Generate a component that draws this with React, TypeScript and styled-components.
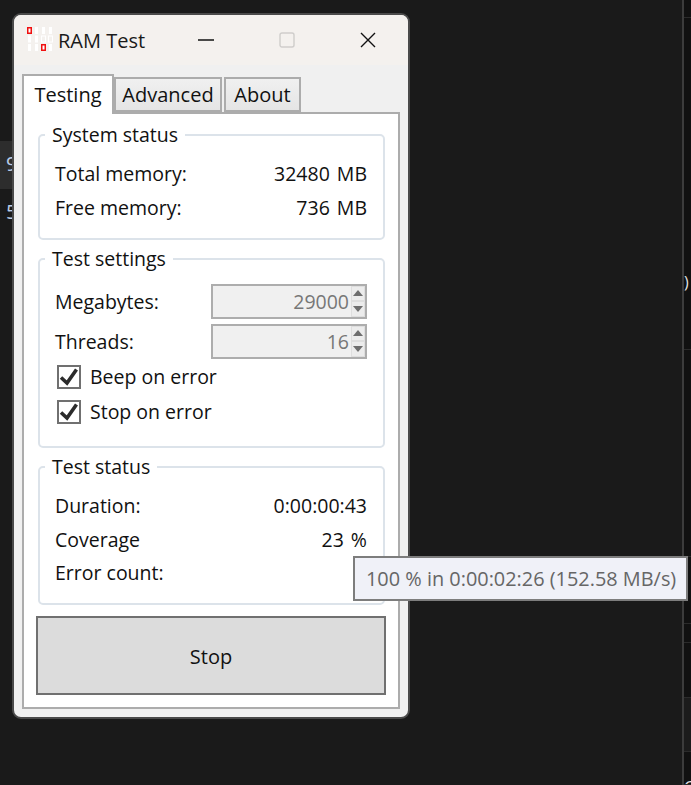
import React from "react"
import styled, { createGlobalStyle } from "styled-components"

const FONT = `"Open Sans", "Noto Sans", sans-serif`

const GlobalStyle = createGlobalStyle`
    html, body {
        margin: 0;
        padding: 0;
        background: #1a1a1a;
    }
    * {
        box-sizing: border-box;
    }
`

const Desktop = styled.div`
    position: relative;
    display: flex;
    width: 691px;
    height: 785px;
    overflow: hidden;
    background: #1a1a1a;
    font-family: ${FONT};
`

const LeftGutter = styled.div`
    width: 12px;
    flex: none;
    padding-top: 141px;
    color: #b9cbe6;
    font-size: 20px;
    line-height: 24px;
`

const GutterRow = styled.div<{ $active?: boolean }>`
    height: ${p => (p.$active ? 48 : 44)}px;
    padding: 11px 0 0 6px;
    background: ${p => (p.$active ? "#2d2d2d" : "transparent")};
    overflow: hidden;
`

const Window = styled.div`
    width: 398px;
    height: 706px;
    margin-top: 13px;
    flex: none;
    display: flex;
    flex-direction: column;
    background: #f0f0f0;
    border: 2px solid #4a4a4a;
    border-radius: 9px;
    overflow: hidden;
`

const TitleBar = styled.div`
    height: 50px;
    flex: none;
    display: flex;
    align-items: center;
    background: #f4f1ee;
    color: #111;
`

const AppIcon = styled.svg`
    width: 28px;
    height: 28px;
    margin-left: 11px;
    flex: none;
`

const Title = styled.div`
    margin-left: 5px;
    width: 108px;
    font-size: 20px;
    color: #1a1a1a;
    white-space: nowrap;
`

const CaptionButton = styled.div`
    width: 81px;
    display: flex;
    justify-content: center;
    align-items: center;
`

const Content = styled.div`
    flex: 1;
    padding: 9px 8px 9px 8px;
    display: flex;
    flex-direction: column;
`

const TabStrip = styled.div`
    height: 38px;
    flex: none;
    display: flex;
    align-items: flex-end;
    position: relative;
    z-index: 1;
`

const Tab = styled.div<{ $active?: boolean; $width: number }>`
    width: ${p => p.$width}px;
    height: ${p => (p.$active ? 40 : 35)}px;
    margin-bottom: ${p => (p.$active ? -2 : 0)}px;
    margin-right: ${p => (p.$active ? 0 : 2)}px;
    padding-bottom: ${p => (p.$active ? 2 : 1)}px;
    display: flex;
    align-items: center;
    justify-content: center;
    font-size: 20px;
    color: #111;
    border: 2px solid #acacac;
    border-bottom: ${p => (p.$active ? "none" : "2px solid #acacac")};
    background: ${p => (p.$active ? "#fff" : "linear-gradient(#f0f0f0, #e5e5e5)")};
`

const TabPanel = styled.div`
    flex: 1;
    display: flex;
    flex-direction: column;
    padding: 20px 12px 12px 14px;
    background: #fff;
    border: 2px solid #acacac;
`

const Group = styled.div<{ $height: number }>`
    position: relative;
    height: ${p => p.$height}px;
    width: 347px;
    flex: none;
    margin-bottom: 18px;
    padding: 21px 16px 0 15px;
    border: 2px solid #dce3ea;
    border-radius: 5px;
    display: flex;
    flex-direction: column;
`

const GroupLegend = styled.div`
    position: absolute;
    top: -14px;
    left: 5px;
    padding: 0 7px;
    background: #fff;
    font-size: 19.5px;
    line-height: 26px;
    color: #111;
`

const InfoRow = styled.div`
    display: flex;
    justify-content: space-between;
    align-items: center;
    height: 33.4px;
    flex: none;
    font-size: 19.5px;
    color: #111;
`

const InfoValue = styled.span`
    word-spacing: 2px;
`

const SpinRow = styled.div`
    display: flex;
    justify-content: space-between;
    align-items: center;
    height: 40px;
    flex: none;
    font-size: 19.5px;
    color: #111;
`

const SpinBox = styled.div`
    width: 156px;
    height: 35px;
    display: flex;
    justify-content: flex-end;
    align-items: center;
    background: #f0f0f0;
    border: 2px solid #adadad;
    color: #777;
    font-size: 19.5px;
`

const SpinButtons = styled.div`
    width: 14px;
    height: 31px;
    margin-left: 2px;
    display: flex;
    flex-direction: column;
`

const SpinButton = styled.div`
    flex: 1;
    display: flex;
    align-items: center;
    justify-content: center;
    background: #ececec;
    border: 1px solid #dedede;
`

const CheckList = styled.div`
    margin-top: -2px;
    display: flex;
    flex-direction: column;
`

const CheckRow = styled.div`
    display: flex;
    align-items: center;
    height: 35px;
    margin-left: 2px;
    font-size: 19.5px;
    color: #111;
`

const CheckBox = styled.div`
    width: 24px;
    height: 24px;
    margin-right: 9px;
    display: flex;
    align-items: center;
    justify-content: center;
    background: #fff;
    border: 2px solid #707070;
`

const StopButton = styled.div`
    width: 350px;
    height: 79px;
    margin-top: -7px;
    margin-left: -2px;
    padding-top: 2px;
    flex: none;
    display: flex;
    align-items: center;
    justify-content: center;
    background: #dcdcdc;
    border: 2px solid #707070;
    font-size: 20px;
    color: #111;
`

const RightPane = styled.div`
    position: relative;
    width: 9px;
    margin-left: auto;
    flex: none;
    display: flex;
    flex-direction: column;
    background: #111;
    border-left: 2px solid #3c3c3c;
    color: #e4e4e4;
    font-size: 16px;
`

const PaneCell = styled.div<{ $height: number; $shade?: boolean; $pad?: number }>`
    height: ${p => p.$height}px;
    flex: none;
    padding-top: ${p => p.$pad ?? 0}px;
    border-bottom: 1px solid #2b2b2b;
    background: ${p => (p.$shade ? "#1c1c1c" : "transparent")};
    overflow: hidden;
    line-height: 20px;
`

const Tooltip = styled.div`
    position: absolute;
    left: 353px;
    top: 556px;
    width: 335px;
    height: 45px;
    display: flex;
    align-items: center;
    padding-left: 11px;
    background: #f0f1f8;
    border: 2px solid #7d7d7d;
    color: #666;
    font-size: 19.9px;
    white-space: nowrap;
`

// bit-grid logo: white digits with two red flagged cells
const Logo = () => {
    const rows = ["0111", "1100", "1101"]
    return (
        <AppIcon viewBox="0 0 28 28">
            {rows.map((row, y) =>
                row.split("").map((bit, x) => {
                    const flagged = (x === 0 && y === 0) || (x === 2 && y === 2)
                    const cx = 2 + x * 7
                    const cy = 1 + y * 8.5
                    if (flagged) {
                        return (
                            <rect key={`${x}-${y}`} x={cx + 0.75} y={cy + 0.75} width={3.5} height={5.5} fill="#fff" stroke="#f01010" strokeWidth={1.5} />
                        )
                    }
                    if (bit === "0") {
                        return <rect key={`${x}-${y}`} x={cx + 0.5} y={cy + 0.5} width={4} height={6} fill="none" stroke="#fff" />
                    }
                    return <rect key={`${x}-${y}`} x={cx + 1} y={cy} width={3} height={7} fill="#fff" />
                })
            )}
        </AppIcon>
    )
}

const Arrow = ({ up }: { up?: boolean }) => (
    <svg width="10" height="6" viewBox="0 0 10 6">
        <path d={up ? "M5 0 L10 6 L0 6 Z" : "M0 0 L10 0 L5 6 Z"} fill="#6e6e6e" />
    </svg>
)

const Spin = ({ value }: { value: string }) => (
    <SpinBox>
        {value}
        <SpinButtons>
            <SpinButton><Arrow up /></SpinButton>
            <SpinButton><Arrow /></SpinButton>
        </SpinButtons>
    </SpinBox>
)

const Check = ({ label }: { label: string }) => (
    <CheckRow>
        <CheckBox>
            <svg width="20" height="20" viewBox="0 0 20 20">
                <path d="M2 10.5 L8 16 L17.5 2.5" fill="none" stroke="#2b2b2b" strokeWidth="3.6" />
            </svg>
        </CheckBox>
        {label}
    </CheckRow>
)

const App = () => {
    return (
        <Desktop>
            <GlobalStyle />
            <LeftGutter>
                <GutterRow $active>9</GutterRow>
                <GutterRow>5</GutterRow>
            </LeftGutter>
            <Window>
                <TitleBar>
                    <Logo />
                    <Title>RAM Test</Title>
                    <CaptionButton>
                        <svg width="16" height="2" viewBox="0 0 16 2">
                            <path d="M0 1 H16" stroke="#111" strokeWidth="1.4" />
                        </svg>
                    </CaptionButton>
                    <CaptionButton>
                        <svg width="16" height="16" viewBox="0 0 16 16">
                            <rect x="1" y="1" width="14" height="14" rx="2" fill="none" stroke="#cfcdcb" strokeWidth="1.4" />
                        </svg>
                    </CaptionButton>
                    <CaptionButton>
                        <svg width="16" height="16" viewBox="0 0 16 16">
                            <path d="M1 1 L15 15 M15 1 L1 15" stroke="#111" strokeWidth="1.4" />
                        </svg>
                    </CaptionButton>
                </TitleBar>
                <Content>
                    <TabStrip>
                        <Tab $active $width={92}>Testing</Tab>
                        <Tab $width={108}>Advanced</Tab>
                        <Tab $width={77}>About</Tab>
                    </TabStrip>
                    <TabPanel>
                        <Group $height={106}>
                            <GroupLegend>System status</GroupLegend>
                            <InfoRow><span>Total memory:</span><InfoValue>32480 MB</InfoValue></InfoRow>
                            <InfoRow><span>Free memory:</span><InfoValue>736 MB</InfoValue></InfoRow>
                        </Group>
                        <Group $height={190}>
                            <GroupLegend>Test settings</GroupLegend>
                            <SpinRow><span>Megabytes:</span><Spin value="29000" /></SpinRow>
                            <SpinRow><span>Threads:</span><Spin value="16" /></SpinRow>
                            <CheckList>
                                <Check label="Beep on error" />
                                <Check label="Stop on error" />
                            </CheckList>
                        </Group>
                        <Group $height={139}>
                            <GroupLegend>Test status</GroupLegend>
                            <InfoRow><span>Duration:</span><InfoValue>0:00:00:43</InfoValue></InfoRow>
                            <InfoRow><span>Coverage</span><InfoValue>23 %</InfoValue></InfoRow>
                            <InfoRow><span>Error count:</span></InfoRow>
                        </Group>
                        <StopButton>Stop</StopButton>
                    </TabPanel>
                </Content>
            </Window>
            <RightPane>
                <PaneCell $height={18} />
                <PaneCell $height={332} $pad={254}>)</PaneCell>
                <PaneCell $height={207} />
                <PaneCell $height={67} />
                <PaneCell $height={19} />
                <PaneCell $height={55} />
                <PaneCell $height={54} $shade />
                <PaneCell $height={33} $pad={25}>C</PaneCell>
            </RightPane>
            <Tooltip>100 % in 0:00:02:26 (152.58 MB/s)</Tooltip>
        </Desktop>
    )
}

export default App
